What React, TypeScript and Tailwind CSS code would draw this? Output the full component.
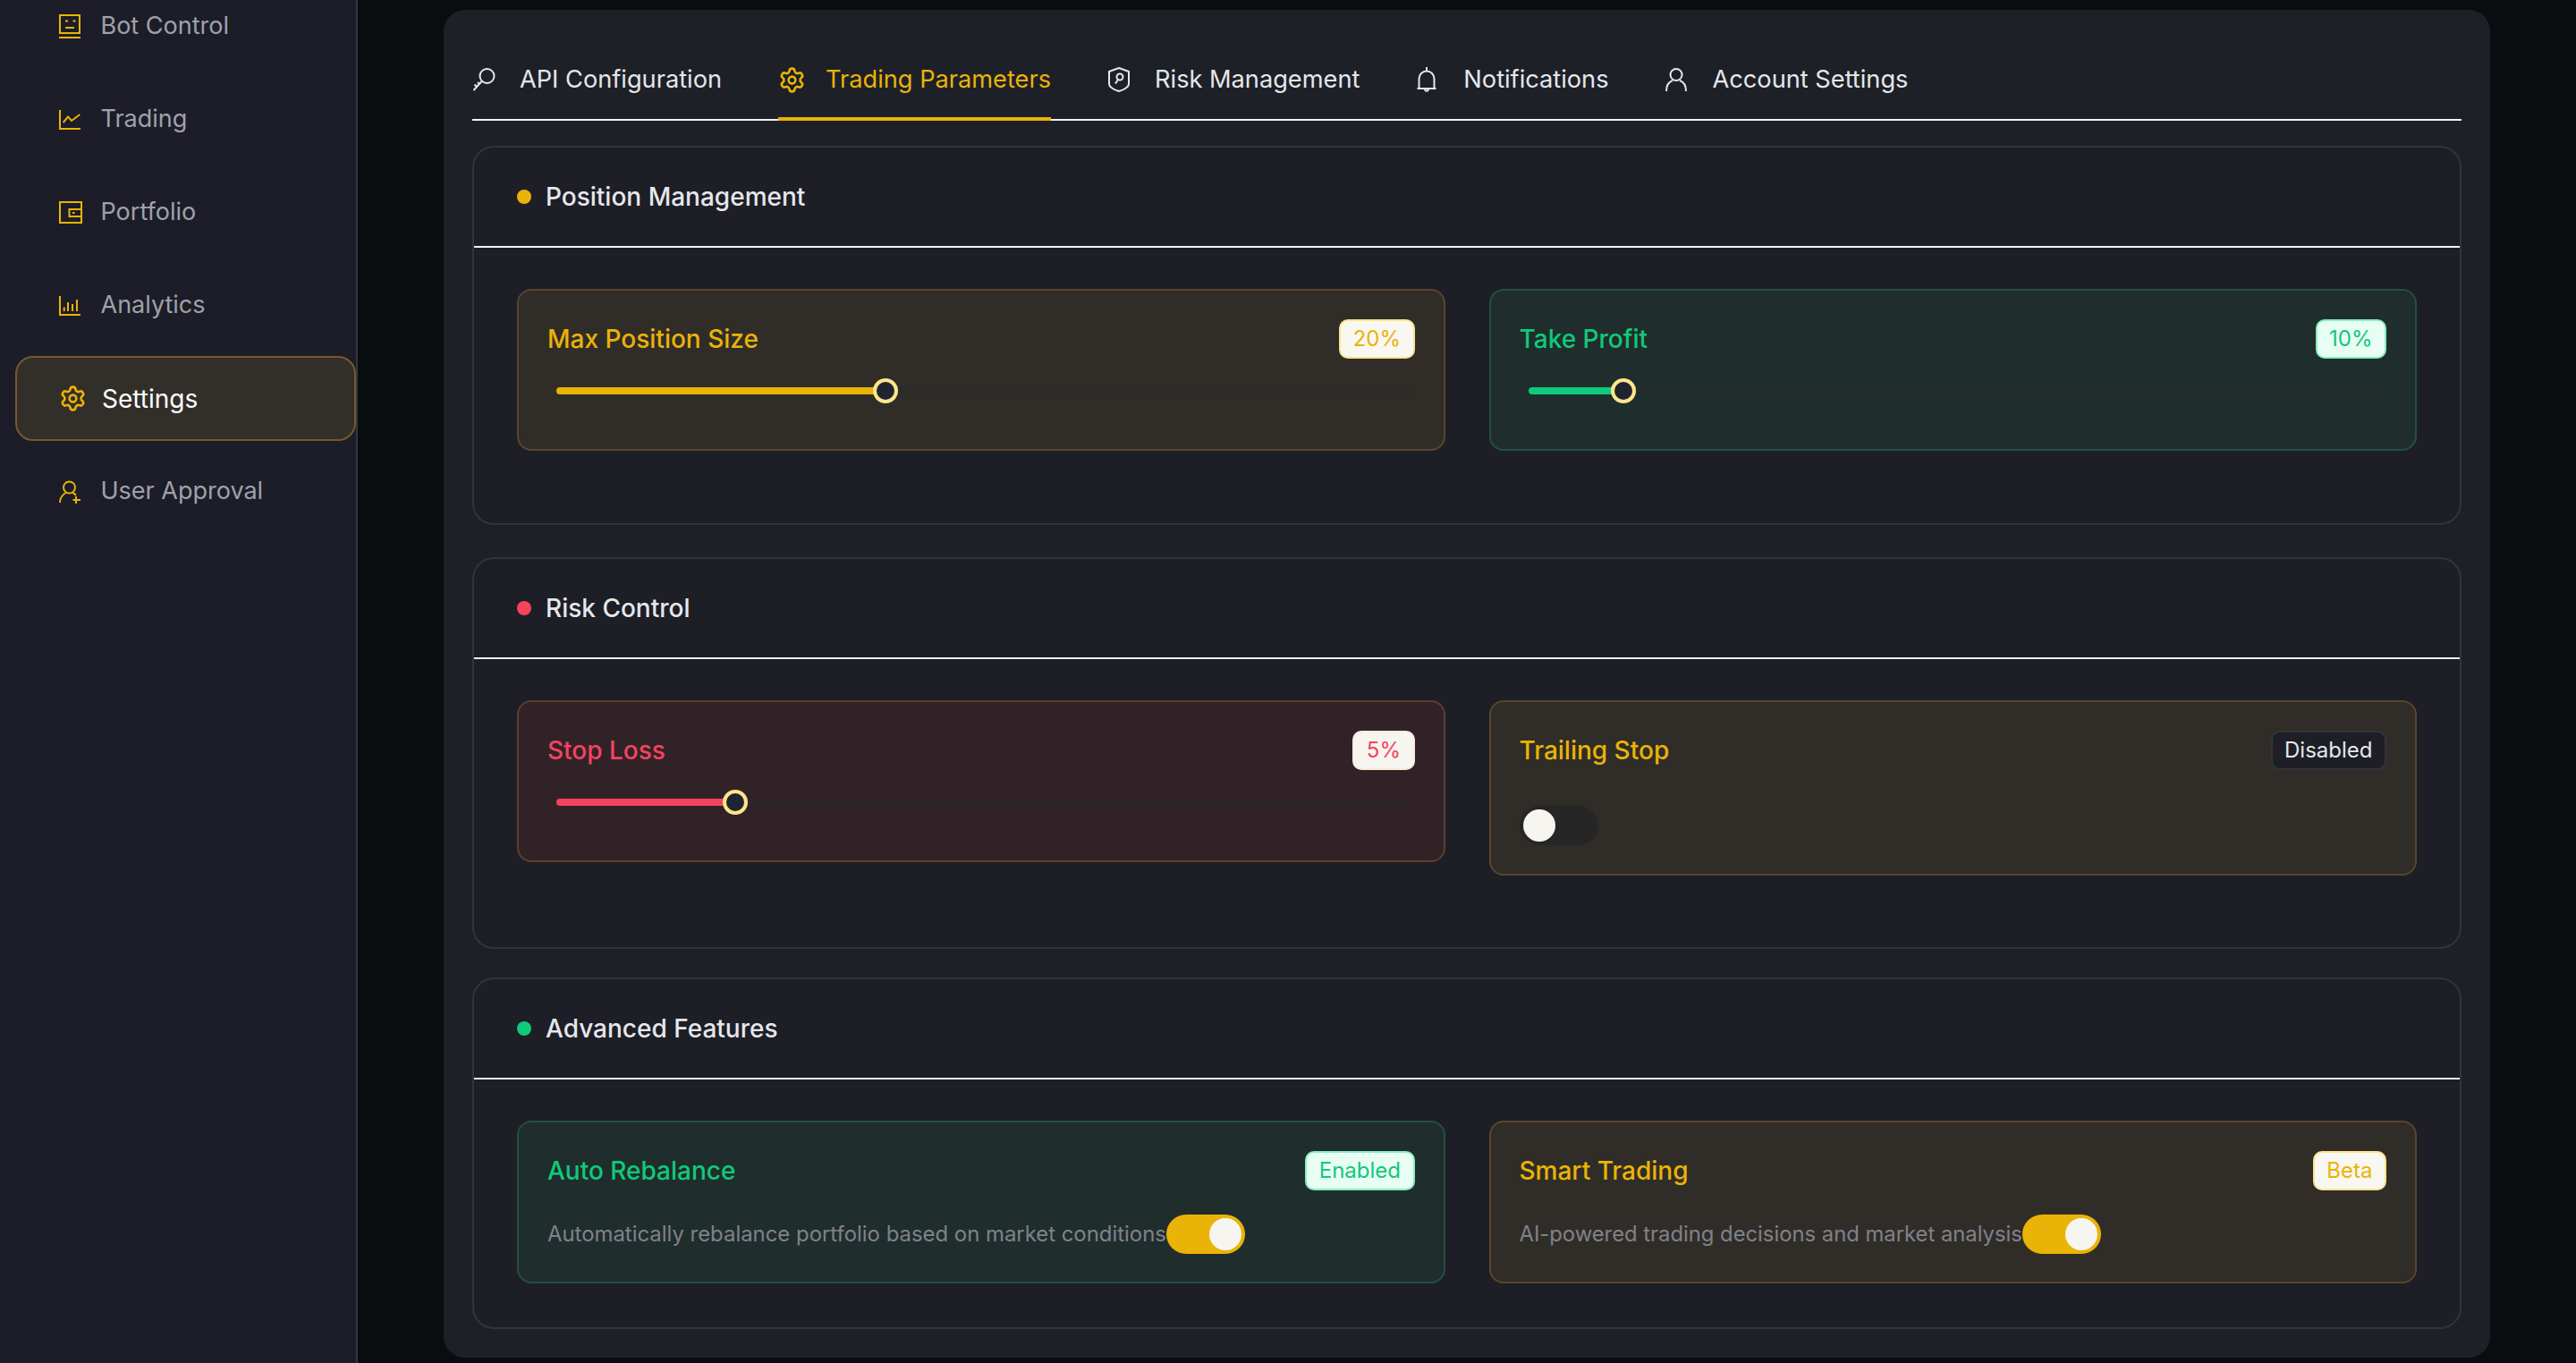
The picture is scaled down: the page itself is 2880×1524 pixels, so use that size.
import { Settings } from "lucide-react";
import type { ReactNode } from "react";

const Y = "#eab308";

// sidebar icons
const BotIcon = () => (
  <svg viewBox="0 0 24 27" className="w-[24px] h-[27px]" fill="none" stroke={Y} strokeWidth="2">
    <rect x="1" y="1" width="22" height="20" />
    <path d="M0 26h24" />
    <path d="M7 7.500h3M15.500 7.500h3M7 15h10" />
  </svg>
);
const ChartIcon = () => (
  <svg viewBox="0 0 24 22" className="w-[24px] h-[22px]" fill="none" stroke={Y} strokeWidth="2">
    <path d="M1 0v21h23" />
    <path d="M4.700 14l5.300-6.400 4 4.400 9.300-7" />
  </svg>
);
const WalletIcon = () => (
  <svg viewBox="0 0 26 25" className="w-[26px] h-[25px]" fill="none" stroke={Y} strokeWidth="2">
    <rect x="1" y="1" width="24" height="23" />
    <path d="M25 9H11.500v8H25" />
    <path d="M15 13h2.500" />
  </svg>
);
const BarsIcon = () => (
  <svg viewBox="0 0 24 22" className="w-[24px] h-[22px]" fill="none" stroke={Y} strokeWidth="2">
    <path d="M1 0v21h23" />
    <path d="M5.700 12.500V17M10 7v10M15 9v8M20 4v13" />
  </svg>
);
const UserPlusIcon = () => (
  <svg viewBox="0 0 24 26" className="w-[24px] h-[26px]" fill="none" stroke={Y} strokeWidth="2">
    <circle cx="11.500" cy="8" r="6.500" />
    <path d="M1 25c0-5.500 3-9 6.500-11M15.500 14c1.500.8 2.600 1.700 3.400 2.800" />
    <path d="M19 18v8M15.500 22h8.500" />
  </svg>
);

// tab icons
const KeyIcon = () => (
  <svg viewBox="0 0 26 26" className="w-[26px] h-[26px]" fill="none" stroke="#e5e7eb" strokeWidth="2">
    <circle cx="16.500" cy="9" r="8" />
    <path d="M10.500 15L1.500 25M5 21l-2.500-2.500M8 18l-2-2" />
  </svg>
);
const ShieldIcon = () => (
  <svg viewBox="0 0 26 28" className="w-[26px] h-[28px]" fill="none" stroke="#e5e7eb" strokeWidth="2">
    <path d="M13 1l11 4v14c0 3-5 6.500-11 8C7 25.500 2 22 2 19V5z" />
    <circle cx="14" cy="11" r="3.500" />
    <path d="M12 14l-3 4.500" />
  </svg>
);
const BellIcon = () => (
  <svg viewBox="0 0 24 28" className="w-[24px] h-[28px]" fill="none" stroke="#e5e7eb" strokeWidth="2">
    <path d="M12 0v4" />
    <path d="M3.500 24V13a8.500 8.500 0 0 1 17 0v11z" />
    <path d="M1.500 24h21" />
    <path d="M10 24c0 3.500 4 3.500 4 0" />
  </svg>
);
const UserIcon = () => (
  <svg viewBox="0 0 24 26" className="w-[24px] h-[26px]" fill="none" stroke="#e5e7eb" strokeWidth="2">
    <circle cx="12" cy="7.500" r="6.500" />
    <path d="M1 26c0-7 3-10.500 7-12M23 26c0-7-3-10.500-7-12" />
  </svg>
);

const navItems: { label: string; icon: ReactNode; active?: boolean }[] = [
  { label: "Bot Control", icon: <BotIcon /> },
  { label: "Trading", icon: <ChartIcon /> },
  { label: "Portfolio", icon: <WalletIcon /> },
  { label: "Analytics", icon: <BarsIcon /> },
  { label: "Settings", icon: <Settings size={31} color={Y} strokeWidth={2} className="shrink-0" />, active: true },
  { label: "User Approval", icon: <UserPlusIcon /> },
];

const tabs: { label: string; icon: ReactNode; active?: boolean }[] = [
  { label: "API Configuration", icon: <KeyIcon /> },
  { label: "Trading Parameters", icon: <Settings size={31} color={Y} strokeWidth={2} className="shrink-0" />, active: true },
  { label: "Risk Management", icon: <ShieldIcon /> },
  { label: "Notifications", icon: <BellIcon /> },
  { label: "Account Settings", icon: <UserIcon /> },
];

const cardThemes = {
  yellow: { card: "bg-[#302d28] border-[#5a452e]", title: "text-[#eab308]", fill: "bg-[#eab308]" },
  green: { card: "bg-[#202d2d] border-[#24503f]", title: "text-[#10c97a]", fill: "bg-[#10c97a]" },
  red: { card: "bg-[#312228] border-[#5a412d]", title: "text-[#f4435f]", fill: "bg-[#f4435f]" },
};

const badgeThemes = {
  yellow: "bg-[#f8f7f2] border-[#fde68a] text-[#eab308]",
  green: "bg-[#e8fdf3] border-[#86efc0] text-[#10c97a]",
  red: "bg-[#f7f5f0] border-[#f8ecd8] text-[#f4435f]",
  dark: "bg-[#1d1e26] border-[#32343c] text-[#e5e7eb]",
};

type Tone = keyof typeof cardThemes;

const Badge = ({ text, tone }: { text: string; tone: keyof typeof badgeThemes }) => (
  <span className={`h-[44px] px-[13.5px] flex items-center rounded-[10px] border-2 text-[24px] ${badgeThemes[tone]}`}>
    {text}
  </span>
);

const Slider = ({ at, tone }: { at: number; tone: Tone }) => (
  <div className="relative mt-[22px] mx-[10px] mr-[6px] h-[28px] flex items-center">
    <div className="w-full h-[8px] rounded-full bg-[#2a2a28]/40" />
    <div
      className={`absolute left-0 h-[8px] rounded-full ${cardThemes[tone].fill}`}
      style={{ width: at }}
    />
    <div
      className="absolute w-[28px] h-[28px] rounded-full border-4 border-[#fde68a] bg-[#1f2530]"
      style={{ left: at - 14 }}
    />
  </div>
);

const Toggle = ({ on }: { on: boolean }) => (
  <div className={`w-[88px] h-[44px] shrink-0 rounded-full p-[4px] flex ${on ? "bg-[#eab308] justify-end" : "bg-[#262626] justify-start"}`}>
    <div className="w-[36px] h-[36px] rounded-full bg-[#f6f5f0]" />
  </div>
);

const Card = ({ title, tone, badge, badgeTone, children, pb }: { title: string; tone: Tone; badge: string; badgeTone: keyof typeof badgeThemes; children: ReactNode; pb: string }) => (
  <div className={`rounded-[16px] border-2 px-[32px] pt-[32px] ${pb} ${cardThemes[tone].card}`}>
    <div className="flex items-center justify-between">
      <span className={`text-[28px] font-medium ${cardThemes[tone].title}`}>{title}</span>
      <Badge text={badge} tone={badgeTone} />
    </div>
    {children}
  </div>
);

const Section = ({ title, dot, pb, mb, children }: { title: string; dot: string; pb: string; mb: string; children: ReactNode }) => (
  <section className={`rounded-[24px] border-2 border-[#32343c] bg-[#1d1e26] ${mb}`}>
    <div className="h-[112px] pl-[48px] flex items-center gap-[16px] border-b-2 border-[#f3f4f6]">
      <span className={`w-[16px] h-[16px] rounded-full ${dot}`} />
      <h2 className="text-[28px] font-medium text-[#e5e7eb]">{title}</h2>
    </div>
    <div className={`px-[48px] pt-[46px] ${pb} grid grid-cols-2 gap-[49px] items-start`}>{children}</div>
  </section>
);

export default function App() {
  return (
    <div className="flex w-[2880px] h-[1524px] overflow-hidden bg-[#0a0d10] font-['Inter',sans-serif]">
      <aside className="w-[400px] shrink-0 border-r-2 border-[#34363e] bg-[#1c1d28] pl-[17px]">
        <nav className="-mt-[18px] flex flex-col gap-[9px]">
          {navItems.map((item) => (
            <a
              key={item.label}
              className={`h-[95px] flex items-center rounded-[20px] border-2 ${
                item.active ? "border-[#76592e] bg-[#322f2a] text-white" : "border-transparent text-[#9fa2aa]"
              }`}
            >
              <span className={`ml-[47px] flex justify-start ${item.active ? "w-[48px]" : "w-[46.5px]"}`}>{item.icon}</span>
              <span className={item.active ? "text-[28px]" : "text-[27px]"}>{item.label}</span>
            </a>
          ))}
        </nav>
      </aside>

      <main className="flex-1 pl-[96px] pr-[96px] pt-[11px]">
        <div className="h-[1507px] rounded-[24px] bg-[#1e2027] px-[32px] pt-[32px]">
          <div className="h-[92px] flex gap-[63px] border-b-2 border-[#f3f4f6]">
            {tabs.map((tab) => (
              <button
                key={tab.label}
                className={`h-[92px] flex items-center gap-[24px] text-[27.2px] ${
                  tab.active ? "text-[#eab308] border-b-4 border-[#eab308] pt-[4px]" : "text-[#e5e7eb]"
                }`}
              >
                <span className="w-[29px] flex justify-start">{tab.icon}</span>
                {tab.label}
              </button>
            ))}
          </div>

          <div className="mt-[28px]">
            <Section title="Position Management" dot="bg-[#eab308]" pb="pb-[81px]" mb="mb-[36px]">
              <Card title="Max Position Size" tone="yellow" badge="20%" badgeTone="yellow" pb="pb-[51px]">
                <Slider at={368} tone="yellow" />
              </Card>
              <Card title="Take Profit" tone="green" badge="10%" badgeTone="green" pb="pb-[51px]">
                <Slider at={106} tone="green" />
              </Card>
            </Section>

            <Section title="Risk Control" dot="bg-[#f4435f]" pb="pb-[80px]" mb="mb-[32px]">
              <Card title="Stop Loss" tone="red" badge="5%" badgeTone="red" pb="pb-[51px]">
                <Slider at={200} tone="red" />
              </Card>
              <Card title="Trailing Stop" tone="yellow" badge="Disabled" badgeTone="dark" pb="pb-[32px]">
                <div className="mt-[40px]">
                  <Toggle on={false} />
                </div>
              </Card>
            </Section>

            <Section title="Advanced Features" dot="bg-[#10c97a]" pb="pb-[49px]" mb="mb-0">
              <Card title="Auto Rebalance" tone="green" badge="Enabled" badgeTone="green" pb="pb-[31px]">
                <div className="mt-[27px] flex items-center">
                  <span className="text-[23.9px] text-[#7f828a]">Automatically rebalance portfolio based on market conditions</span>
                  <Toggle on />
                </div>
              </Card>
              <Card title="Smart Trading" tone="yellow" badge="Beta" badgeTone="yellow" pb="pb-[31px]">
                <div className="mt-[27px] flex items-center">
                  <span className="text-[23.8px] text-[#7f828a]">AI-powered trading decisions and market analysis</span>
                  <Toggle on />
                </div>
              </Card>
            </Section>
          </div>
        </div>
      </main>
    </div>
  );
}
